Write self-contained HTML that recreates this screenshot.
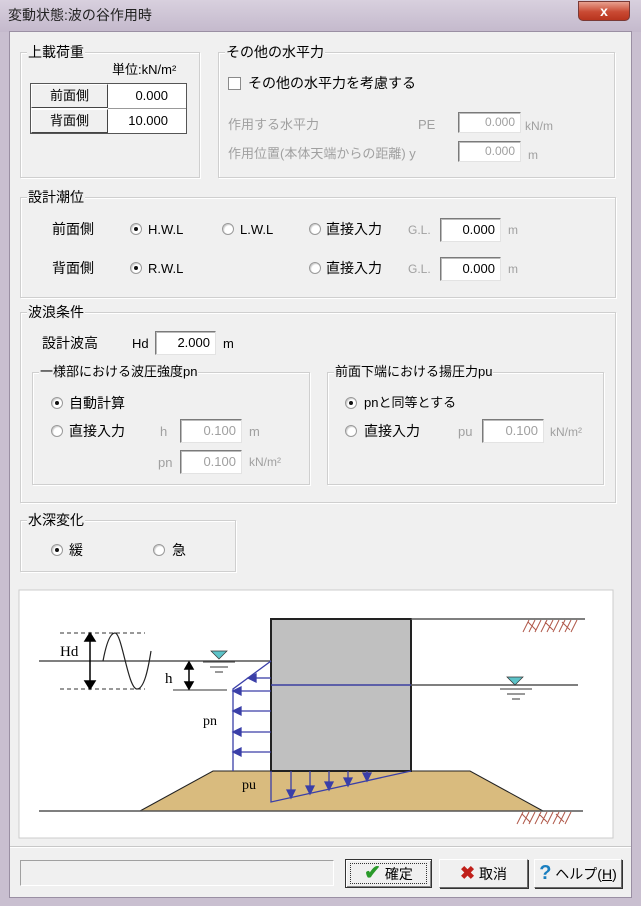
<!DOCTYPE html>
<html><head><meta charset="utf-8">
<style>
*{margin:0;padding:0;box-sizing:border-box}
body{width:641px;height:906px;overflow:hidden;background:#c9bfd0;font-family:"Liberation Sans","Noto Sans CJK JP",sans-serif;font-size:13px;color:#000;position:relative}
.a{position:absolute;white-space:nowrap;line-height:16px}
#title{position:absolute;left:0;top:0;width:641px;height:32px;background:linear-gradient(#d8d0de,#c4b9cc)}
#client{position:absolute;left:9px;top:31px;width:623px;height:867px;background:#f0f0f0;border:1px solid #9a8fa3}
.g{position:absolute;border:1px solid #cfcfcf;box-shadow:inset 1px 1px 0 #fff,1px 1px 0 #fff}
.gl{position:absolute;background:#f0f0f0;padding:0 1px;line-height:16px;white-space:nowrap}
.in{position:absolute;background:#fff;border:1px solid;border-color:#7a7a7a #e3e3e3 #e3e3e3 #7a7a7a;box-shadow:inset 1px 1px 0 #bbb;text-align:right;padding-right:5px;line-height:19px;font-size:13px}
.gr{color:#a0a0a0}
.rd{position:absolute;width:12px;height:12px;border-radius:50%;background:#fff;border:1px solid #9a9a9a;box-shadow:inset 1px 1px 1px #ccc}
.rd.on::after{content:"";position:absolute;left:3px;top:3px;width:4px;height:4px;border-radius:50%;background:#111}
.btn{position:absolute;border:1px solid;border-color:#fff #6b6b6b #6b6b6b #fff;background:#f0f0f0;box-shadow:1px 1px 0 #333;font-size:14px;line-height:27px;text-align:center}
</style></head><body>
<div id="title"></div>
<div class="a" style="left:8px;top:7px;font-size:14px;color:#222">変動状態:波の谷作用時</div>
<div style="position:absolute;left:578px;top:1px;width:52px;height:20px;border-radius:0 0 5px 5px;background:linear-gradient(#e8a090,#c94a33 55%,#b8341e);border:1px solid #7a3a36;color:#fff;font-weight:bold;text-align:center;line-height:18px;font-size:14px">x</div>
<div id="client"></div>

<!-- 上載荷重 -->
<div class="g" style="left:20px;top:52px;width:180px;height:126px"></div>
<div class="gl" style="left:27px;top:44px;font-size:14px">上載荷重</div>
<div class="a" style="left:112px;top:62px;font-size:13px">単位:kN/m²</div>
<div style="position:absolute;left:30px;top:83px;width:157px;height:51px;border:1px solid #555;background:#fff"></div>
<div class="a" style="left:31px;top:84px;width:77px;height:24px;background:#f0f0f0;border:1px solid;border-color:#fff #444 #444 #fff;text-align:center;line-height:22px">前面側</div>
<div class="a" style="left:31px;top:109px;width:77px;height:24px;background:#f0f0f0;border:1px solid;border-color:#fff #444 #444 #fff;text-align:center;line-height:22px">背面側</div>
<div style="position:absolute;left:108px;top:108px;width:78px;height:1px;background:#999"></div>
<div class="a" style="left:110px;top:88px;width:58px;text-align:right">0.000</div>
<div class="a" style="left:110px;top:113px;width:58px;text-align:right">10.000</div>

<!-- その他の水平力 -->
<div class="g" style="left:218px;top:52px;width:397px;height:126px"></div>
<div class="gl" style="left:225px;top:44px;font-size:14px">その他の水平力</div>
<div style="position:absolute;left:228px;top:77px;width:13px;height:13px;background:#fff;border:1px solid #8a8a8a"></div>
<div class="a" style="left:248px;top:75px;font-size:14px">その他の水平力を考慮する</div>
<div class="a gr" style="left:228px;top:117px">作用する水平力</div>
<div class="a gr" style="left:418px;top:117px">PE</div>
<div class="in gr" style="left:458px;top:112px;width:63px;height:21px;font-size:12px">0.000</div>
<div class="a gr" style="left:525px;top:118px;font-size:12px">kN/m</div>
<div class="a gr" style="left:228px;top:146px">作用位置(本体天端からの距離) y</div>
<div class="in gr" style="left:458px;top:141px;width:63px;height:21px;font-size:12px">0.000</div>
<div class="a gr" style="left:528px;top:147px;font-size:12px">m</div>

<!-- 設計潮位 -->
<div class="g" style="left:20px;top:197px;width:596px;height:101px"></div>
<div class="gl" style="left:27px;top:189px;font-size:14px">設計潮位</div>
<div class="a" style="left:52px;top:221px;font-size:14px">前面側</div>
<div class="rd on" style="left:130px;top:223px"></div><div class="a" style="left:148px;top:222px">H.W.L</div>
<div class="rd" style="left:222px;top:223px"></div><div class="a" style="left:240px;top:222px">L.W.L</div>
<div class="rd" style="left:309px;top:223px"></div><div class="a" style="left:326px;top:221px;font-size:14px">直接入力</div>
<div class="a gr" style="left:408px;top:222px;font-size:12px">G.L.</div>
<div class="in" style="left:440px;top:218px;width:61px;height:24px;line-height:22px">0.000</div>
<div class="a gr" style="left:508px;top:222px;font-size:12px">m</div>
<div class="a" style="left:52px;top:260px;font-size:14px">背面側</div>
<div class="rd on" style="left:130px;top:262px"></div><div class="a" style="left:148px;top:261px">R.W.L</div>
<div class="rd" style="left:309px;top:262px"></div><div class="a" style="left:326px;top:260px;font-size:14px">直接入力</div>
<div class="a gr" style="left:408px;top:261px;font-size:12px">G.L.</div>
<div class="in" style="left:440px;top:257px;width:61px;height:24px;line-height:22px">0.000</div>
<div class="a gr" style="left:508px;top:261px;font-size:12px">m</div>

<!-- 波浪条件 -->
<div class="g" style="left:20px;top:312px;width:596px;height:191px"></div>
<div class="gl" style="left:27px;top:304px;font-size:14px">波浪条件</div>
<div class="a" style="left:42px;top:335px;font-size:14px">設計波高</div>
<div class="a" style="left:132px;top:336px">Hd</div>
<div class="in" style="left:155px;top:331px;width:61px;height:24px;line-height:22px">2.000</div>
<div class="a" style="left:223px;top:336px">m</div>

<div class="g" style="left:32px;top:372px;width:278px;height:113px"></div>
<div class="gl" style="left:39px;top:364px;font-size:13px">一様部における波圧強度pn</div>
<div class="rd on" style="left:51px;top:397px"></div><div class="a" style="left:69px;top:395px;font-size:14px">自動計算</div>
<div class="rd" style="left:51px;top:425px"></div><div class="a" style="left:69px;top:423px;font-size:14px">直接入力</div>
<div class="a gr" style="left:160px;top:424px">h</div>
<div class="in gr" style="left:180px;top:419px;width:62px;height:24px;line-height:22px">0.100</div>
<div class="a gr" style="left:249px;top:424px">m</div>
<div class="a gr" style="left:158px;top:455px">pn</div>
<div class="in gr" style="left:180px;top:450px;width:62px;height:24px;line-height:22px">0.100</div>
<div class="a gr" style="left:249px;top:454px;font-size:12px">kN/m²</div>

<div class="g" style="left:327px;top:372px;width:277px;height:113px"></div>
<div class="gl" style="left:334px;top:364px;font-size:13px">前面下端における揚圧力pu</div>
<div class="rd on" style="left:345px;top:397px"></div><div class="a" style="left:364px;top:395px;font-size:13px">pnと同等とする</div>
<div class="rd" style="left:345px;top:425px"></div><div class="a" style="left:364px;top:423px;font-size:14px">直接入力</div>
<div class="a gr" style="left:458px;top:424px">pu</div>
<div class="in gr" style="left:482px;top:419px;width:62px;height:24px;line-height:22px">0.100</div>
<div class="a gr" style="left:550px;top:424px;font-size:12px">kN/m²</div>

<!-- 水深変化 -->
<div class="g" style="left:20px;top:520px;width:216px;height:52px"></div>
<div class="gl" style="left:27px;top:512px;font-size:14px">水深変化</div>
<div class="rd on" style="left:51px;top:544px"></div><div class="a" style="left:69px;top:542px;font-size:14px">緩</div>
<div class="rd" style="left:153px;top:544px"></div><div class="a" style="left:172px;top:542px;font-size:14px">急</div>

<!-- diagram -->
<svg style="position:absolute;left:0;top:0" width="641" height="906">
<rect x="19" y="590" width="594" height="248" fill="#fff" stroke="#ccc"/>
<polygon points="213,771 470,771 543,811 140,811" fill="#d9bb7e" stroke="#222" stroke-width="1"/>
<line x1="39" y1="811" x2="583" y2="811" stroke="#555" stroke-width="1.5"/>
<rect x="271" y="619" width="140" height="152" fill="#c0c0c0" stroke="#222" stroke-width="2"/>
<line x1="411" y1="619" x2="585" y2="619" stroke="#555" stroke-width="1.5"/>
<g stroke="#b0584a" stroke-width="1">
<path d="M523,632l6,-12M529,632l6,-12M535,632l6,-12M541,632l6,-12M547,632l6,-12M553,632l6,-12M559,632l6,-12M565,632l6,-12M571,632l6,-12M528,622l8,8M545,622l8,8M562,622l8,8"/>
<path d="M517,824l6,-12M523,824l6,-12M529,824l6,-12M535,824l6,-12M541,824l6,-12M547,824l6,-12M553,824l6,-12M559,824l6,-12M565,824l6,-12M522,814l8,8M539,814l8,8M556,814l8,8"/>
</g>
<line x1="39" y1="661" x2="271" y2="661" stroke="#555" stroke-width="1.5"/>
<line x1="411" y1="685" x2="578" y2="685" stroke="#555" stroke-width="1.5"/>
<line x1="271" y1="685" x2="411" y2="685" stroke="#3a3fa0" stroke-width="1.5"/>
<line x1="173" y1="690" x2="227" y2="690" stroke="#333" stroke-width="1"/>
<g stroke="#333" stroke-dasharray="4,3"><line x1="60" y1="633" x2="145" y2="633"/><line x1="60" y1="689" x2="145" y2="689"/></g>
<path d="M103,661 C106,645 110,633 115,633 C122,633 128,689 137,689 C144,689 148,670 151,651" fill="none" stroke="#222" stroke-width="1.2"/>
<g stroke="#000" stroke-width="1.5" fill="#000">
<line x1="90" y1="638" x2="90" y2="684"/><polygon points="85,641 95,641 90,633"/><polygon points="85,681 95,681 90,689"/>
<line x1="189" y1="666" x2="189" y2="685"/><polygon points="185,669 193,669 189,662"/><polygon points="185,682 193,682 189,689"/>
</g>
<text x="60" y="656" font-family="Liberation Serif,serif" font-size="15">Hd</text>
<text x="165" y="683" font-family="Liberation Serif,serif" font-size="15">h</text>
<text x="203" y="725" font-family="Liberation Serif,serif" font-size="14">pn</text>
<text x="242" y="789" font-family="Liberation Serif,serif" font-size="14">pu</text>
<polygon points="211,651 227,651 219,659" fill="#5cc3c8" stroke="#333" stroke-width="0.7"/>
<path d="M203,662h32M210,667h18M215,672h8" stroke="#333"/>
<polygon points="507,677 523,677 515,685" fill="#5cc3c8" stroke="#333" stroke-width="0.7"/>
<path d="M500,689h32M507,694h18M512,699h8" stroke="#333"/>
<g stroke="#3a3fa8" stroke-width="1.3" fill="#3a3fa8">
<polyline points="271,661 233,689 233,771" fill="none"/>
<line x1="255" y1="678" x2="271" y2="678"/><polygon points="248,678 256,674 256,682"/>
<line x1="240" y1="691" x2="271" y2="691"/><polygon points="233,691 241,687 241,695"/>
<line x1="240" y1="711" x2="271" y2="711"/><polygon points="233,711 241,707 241,715"/>
<line x1="240" y1="732" x2="271" y2="732"/><polygon points="233,732 241,728 241,736"/>
<line x1="240" y1="752" x2="271" y2="752"/><polygon points="233,752 241,748 241,756"/>
<polyline points="271,771 271,802 411,771" fill="none"/>
<line x1="291" y1="771" x2="291" y2="791"/><polygon points="287,790 295,790 291,798"/>
<line x1="310" y1="771" x2="310" y2="787"/><polygon points="306,786 314,786 310,794"/>
<line x1="329" y1="771" x2="329" y2="782"/><polygon points="325,782 333,782 329,790"/>
<line x1="348" y1="771" x2="348" y2="778"/><polygon points="344,778 352,778 348,786"/>
<line x1="367" y1="771" x2="367" y2="774"/><polygon points="363,773 371,773 367,781"/>
</g>
</svg>

<!-- bottom -->
<div style="position:absolute;left:10px;top:846px;width:621px;height:1px;background:#c8c8c8;box-shadow:0 1px 0 #fff"></div>
<div style="position:absolute;left:20px;top:860px;width:314px;height:26px;border:1px solid;border-color:#a0a0a0 #fff #fff #a0a0a0"></div>
<div class="btn" style="left:345px;top:859px;width:87px;height:29px;border:1px solid #333;box-shadow:inset 1px 1px 0 #fff,inset -1px -1px 0 #888"><div style="position:absolute;left:4px;top:3px;right:4px;bottom:3px;border:1px dotted #333"></div><span style="color:#2a9a2a;font-size:20px;font-weight:bold">✔</span> 確定</div>
<div class="btn" style="left:439px;top:859px;width:89px;height:29px"><span style="color:#c0201a;font-size:18px;font-weight:bold">✖</span> 取消</div>
<div class="btn" style="left:534px;top:859px;width:88px;height:29px"><span style="color:#1a7fc0;font-size:20px;font-weight:bold">?</span> ヘルプ(<u>H</u>)</div>
</body></html>
